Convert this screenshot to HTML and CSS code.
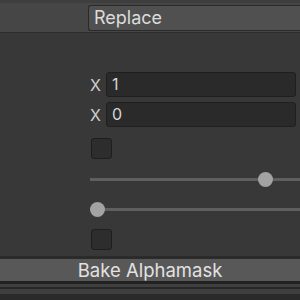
FILE: index.html
```html
<!DOCTYPE html>
<html>
<head>
<meta charset="utf-8">
<link rel="stylesheet" href="styles.css">
</head>
<body>
<div class="panel">
  <div class="topbar">
    <div class="dropdown">Replace</div>
  </div>
  <div class="content">
    <div class="vec-row"><span class="axis">X</span><div class="field">1</div></div>
    <div class="vec-row second"><span class="axis">X</span><div class="field">0</div></div>
    <div class="checkbox first-check"></div>
    <div class="slider s1"><div class="track"></div><div class="thumb" style="left:168px"></div></div>
    <div class="slider s2"><div class="track"></div><div class="thumb" style="left:0px"></div></div>
    <div class="checkbox second-check"></div>
  </div>
  <div class="sep"></div>
  <div class="button">Bake Alphamask</div>
  <div class="footer">
    <div class="fl dark1"></div>
    <div class="fl gray1"></div>
    <div class="fl dark2"></div>
    <div class="fl gray2"></div>
    <div class="fl dark3"></div>
  </div>
</div>
</body>
</html>
```
FILE: styles.css
```css
html, body {
  margin: 0;
  padding: 0;
  background: #383838;
}
body {
  width: 300px;
  height: 300px;
  overflow: hidden;
  font-family: Inter, "Liberation Sans", sans-serif;
  color: #d4d4d4;
}
.panel {
  display: flex;
  flex-direction: column;
  width: 300px;
  height: 300px;
}
.topbar {
  height: 33px;
  box-sizing: border-box;
  background: #464646;
  border-top: 3px solid #3e3e3e;
  border-bottom: 1px solid #2c2c2c;
  padding: 2px 0 1px 88px;
  display: flex;
}
.dropdown {
  flex: 1;
  box-sizing: border-box;
  background: #505050;
  border: 1px solid #2a2a2a;
  border-right: none;
  border-radius: 3px 0 0 3px;
  font-size: 18px;
  line-height: 24px;
  padding-left: 5px;
  color: #dcdcdc;
}
.content {
  display: flex;
  flex-direction: column;
  padding-left: 90px;
  padding-top: 39px;
  height: 223px;
  box-sizing: border-box;
}
.vec-row {
  display: flex;
  align-items: center;
  height: 25px;
}
.vec-row.second {
  margin-top: 5px;
}
.axis {
  width: 16px;
  font-size: 16px;
  color: #cfcfcf;
}
.field {
  flex: 1;
  margin-right: 4px;
  height: 25px;
  box-sizing: border-box;
  background: #2a2a2a;
  border: 1px solid #1f1f1f;
  border-radius: 3px;
  font-size: 16px;
  line-height: 23px;
  padding-left: 5px;
  color: #d6d6d6;
}
.checkbox {
  width: 21px;
  height: 21px;
  box-sizing: border-box;
  background: #2d2d2d;
  border: 1px solid #1e1e1e;
  border-radius: 3px;
  margin-left: 1px;
}
.first-check {
  margin-top: 11px;
}
.slider {
  position: relative;
  height: 16px;
}
.s1 {
  margin-top: 12px;
}
.s2 {
  margin-top: 14px;
}
.track {
  position: absolute;
  left: 0;
  right: 0;
  top: 7px;
  height: 3px;
  background: #5f5f5f;
}
.thumb {
  position: absolute;
  top: 1px;
  width: 15px;
  height: 15px;
  border-radius: 50%;
  background: #a3a3a3;
}
.second-check {
  margin-top: 12px;
}
.sep {
  height: 3px;
  background: #2b2b2b;
}
.button {
  height: 22px;
  background: #585858;
  text-align: center;
  font-size: 18.5px;
  line-height: 22px;
  color: #e2e2e2;
}
.footer {
  flex: 1;
  display: flex;
  flex-direction: column;
}
.fl { flex: none; }
.dark1 { height: 3px; background: #222222; }
.gray1 { height: 3px; background: #404040; }
.dark2 { height: 2px; background: #272727; }
.gray2 { height: 5px; background: #3f3f3f; }
.dark3 { flex: 1; background: #2a2a2a; }
```
